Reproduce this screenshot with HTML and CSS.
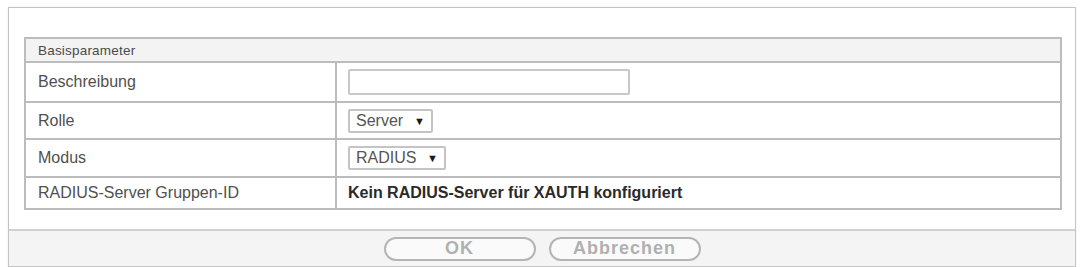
FILE: index.html
```html
<!DOCTYPE html>
<html lang="de">
<head>
<meta charset="utf-8">
<link rel="stylesheet" href="styles.css">
</head>
<body>
<div class="panel">
  <div class="content">
    <table class="params">
      <tr class="head"><th colspan="2">Basisparameter</th></tr>
      <tr class="r1"><td class="label">Beschreibung</td><td class="value"><span class="input"></span></td></tr>
      <tr class="r2"><td class="label">Rolle</td><td class="value"><span class="select sel-server">Server<span class="arrow">▼</span></span></td></tr>
      <tr class="r3"><td class="label">Modus</td><td class="value"><span class="select sel-radius">RADIUS<span class="arrow">▼</span></span></td></tr>
      <tr class="r4"><td class="label">RADIUS-Server Gruppen-ID</td><td class="value bold">Kein RADIUS-Server für XAUTH konfiguriert</td></tr>
    </table>
  </div>
  <div class="footer">
    <span class="btn">OK</span>
    <span class="btn">Abbrechen</span>
  </div>
</div>
</body>
</html>
```
FILE: styles.css
```css
html, body { margin: 0; padding: 0; background: #fff; }
body { padding: 7px 0 0 8px; font-family: "Liberation Sans", Arial, sans-serif; }
.panel {
  width: 1066px;
  border: 1px solid #c4c4c4;
  box-shadow: 0 0 1px #ddd;
}
.content { padding: 29px 13px 19px 15px; }
.params {
  width: 100%;
  border-collapse: collapse;
  border: 2px solid #bcbcbc;
}
.params th, .params td { border: 2px solid #bcbcbc; padding: 0; }
.head th {
  background: #f3f3f3;
  text-align: left;
  font-weight: normal;
  font-size: 13.5px;
  color: #4a4a4a;
  height: 22px;
  padding-left: 12px;
  letter-spacing: 0.2px;
}
.label {
  width: 297px;
  padding-left: 12px !important;
  font-size: 16px;
  color: #505050;
}
.value { padding-left: 11px !important; font-size: 16px; color: #333; }
.r1 td { height: 38px; }
.r2 td { height: 35px; }
.r3 td { height: 36px; }
.r4 td { height: 30px; }
.bold { font-weight: bold; color: #2a2a2a; }
.input {
  display: block;
  width: 278px;
  height: 22px;
  border: 2px solid #c8c8c8;
  border-radius: 2px;
  background: #fff;
}
.select {
  display: inline-flex;
  align-items: center;
  height: 20px;
  border: 2px solid #c4c4c4;
  border-radius: 2px;
  padding: 0 6px 0 6px;
  color: #555;
  font-size: 16px;
  box-sizing: content-box;
}
.sel-server { width: 69px; justify-content: space-between; }
.sel-radius { width: 82px; justify-content: space-between; }
.arrow { font-size: 11px; color: #1a1a1a; }
.footer {
  border-top: 2px solid #d0d0d0;
  background: #f4f4f4;
  height: 35px;
  display: flex;
  justify-content: center;
  align-items: center;
  gap: 13px;
}
.btn {
  width: 148px;
  height: 20px;
  border: 2px solid #b4b4b4;
  border-radius: 12px;
  background: #fafafa;
  display: flex;
  align-items: center;
  justify-content: center;
  font-weight: bold;
  font-size: 18px;
  color: #b0b0b0;
  letter-spacing: 1px;
}
```
